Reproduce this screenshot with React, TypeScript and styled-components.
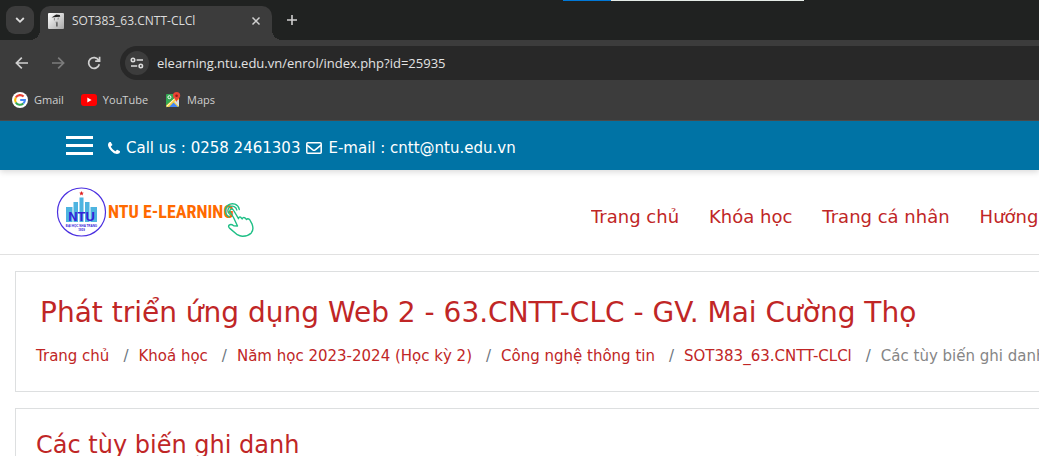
import React from "react";
import styled, { createGlobalStyle } from "styled-components";

const GlobalStyle = createGlobalStyle`
  *, *::before, *::after { box-sizing: border-box; }
  html { background: #fff; }
  body { margin: 0; background: #fff; }
  button { border: 0; padding: 0; background: none; color: inherit; font: inherit; cursor: pointer; }
  a { color: inherit; text-decoration: none; }
`;

const uiFont = `"Open Sans", "Noto Sans", sans-serif`;
const pageFont = `"DejaVu Sans", "Liberation Sans", sans-serif`;

const Shell = styled.div`
  display: flex;
  flex-direction: column;
  height: 100vh;
  padding-bottom: 4px;
  overflow: hidden;
`;

/* Browser window */

const Browser = styled.header`
  flex: none;
  background: #3c3c3c;
  color: #dcdcdc;
  font-family: ${uiFont};
  border-bottom: 1px solid #4a4a4a;
`;

const TabStrip = styled.div`
  position: relative;
  display: flex;
  height: 40px;
  padding: 6px 6px 0;
  background: #202221;
`;

const LoadBar = styled.div`
  position: absolute;
  top: 0;
  left: 563px;
  width: 241px;
  height: 1px;
  background: linear-gradient(to right, #0078d7 48px, #e4ebe6 48px);
`;

const TabSearch = styled.button`
  display: grid;
  place-items: center;
  width: 28px;
  height: 28px;
  border-radius: 9px;
  background: #3c3c3c;
`;

const Tab = styled.div`
  position: relative;
  display: flex;
  align-items: center;
  width: 232px;
  margin-left: 6px;
  padding: 0 8px 4px;
  border-radius: 10px 10px 0 0;
  background: #3c3c3c;

  &::before,
  &::after {
    content: "";
    position: absolute;
    bottom: 0;
    width: 10px;
    height: 10px;
  }
  &::before {
    right: 100%;
    background: radial-gradient(circle at 0 0, transparent 10px, #3c3c3c 10px);
  }
  &::after {
    left: 100%;
    background: radial-gradient(circle at 100% 0, transparent 10px, #3c3c3c 10px);
  }
`;

const TabTitle = styled.span`
  flex: 1;
  margin-left: 8px;
  font-size: 12px;
  line-height: 16px;
  white-space: nowrap;
`;

const IconButton = styled.button<{ $size: number; $dim?: boolean }>`
  display: grid;
  place-items: center;
  flex: none;
  width: ${(p) => p.$size}px;
  height: ${(p) => p.$size}px;
  color: ${(p) => (p.$dim ? "#7c7c7c" : "#d0d0d0")};
`;

const NewTab = styled(IconButton)`
  margin-left: 6px;
`;

const Toolbar = styled.div`
  display: flex;
  align-items: center;
  gap: 8px;
  height: 46px;
  padding-left: 8px;
`;

const AddressBar = styled.div`
  display: flex;
  align-items: center;
  flex: 1;
  height: 34px;
  margin-left: 4px;
  padding-left: 5px;
  border-radius: 17px 0 0 17px;
  background: #282828;
`;

const SiteInfo = styled.button`
  display: grid;
  place-items: center;
  flex: none;
  width: 24px;
  height: 24px;
  border-radius: 50%;
  background: #3c3c3c;
`;

const Address = styled.input`
  flex: 1;
  min-width: 0;
  border: 0;
  outline: 0;
  padding: 0 0 0 8px;
  background: none;
  color: #e2e2e2;
  font-family: ${uiFont};
  font-size: 13px;
  line-height: 20px;
`;

const Bookmarks = styled.nav`
  display: flex;
  align-items: center;
  gap: 17px;
  height: 34px;
  padding: 0 12px 6px;
`;

const Bookmark = styled.a`
  display: flex;
  align-items: center;
  gap: 6px;
  color: #cfcfcf;
  font-size: 11px;
  line-height: 16px;
`;

/* Web page */

const Site = styled.div`
  flex: 1;
  min-height: 0;
  overflow: hidden;
  background: #fff;
  color: #c02626;
  font-family: ${pageFont};
`;

const ContactBar = styled.div`
  display: flex;
  align-items: center;
  height: 49px;
  padding-left: 66px;
  background: #0073a5;
  color: #fff;
  box-shadow: 0 2px 6px rgba(0, 0, 0, 0.15);
`;

const MenuButton = styled.button`
  display: flex;
  flex-direction: column;
  gap: 5px;
  width: 27px;
`;

const MenuLine = styled.span`
  height: 3px;
  background: #fff;
`;

const Contact = styled.p`
  display: flex;
  align-items: center;
  gap: 6px;
  margin: 0 0 0 15px;
  padding-top: 5px;
  font-size: 15px;
  line-height: 22px;
  white-space: nowrap;
`;

const Masthead = styled.div`
  display: flex;
  align-items: center;
  justify-content: space-between;
  height: 85px;
  padding-left: 56px;
  border-bottom: 1px solid #e1e1e1;
`;

const Logo = styled.a`
  display: block;
  flex: none;
  height: 50px;
`;

const MainNav = styled.nav`
  display: flex;
  flex: none;
  gap: 30px;
  width: 448px;
  padding-top: 10px;
  overflow: hidden;
  font-size: 18px;
  line-height: 24px;
  white-space: nowrap;
`;

const Main = styled.main`
  display: flex;
  flex-direction: column;
  gap: 16px;
  padding: 16px 0 16px 15px;
`;

const Card = styled.section`
  padding: 20px 0 23px 20px;
  border: 1px solid #dddfe0;
  border-right: 0;
  overflow: hidden;
  white-space: nowrap;
`;

const PageTitle = styled.h1`
  margin: 0 0 10px 4px;
  font-size: 28px;
  font-weight: 400;
  line-height: 42px;
`;

const SectionTitle = styled.h2`
  margin: 0;
  font-size: 24px;
  font-weight: 400;
  line-height: 32px;
`;

const Crumbs = styled.ol`
  display: flex;
  margin: 0;
  padding: 0;
  list-style: none;
  font-size: 15px;
  line-height: 24px;
`;

const Crumb = styled.li`
  color: #868686;

  & a {
    color: #c02626;
  }
  & + &::before {
    content: "/";
    padding: 0 10px 0 14px;
    color: #6c757d;
  }
`;

const stroke = { fill: "none", stroke: "currentColor", strokeWidth: 1.8 } as const;

const ChevronIcon = () => (
  <svg width="10" height="8" viewBox="0 0 10 8" {...stroke}>
    <path d="M1.2 2 5 5.8 8.8 2" />
  </svg>
);

const FaviconIcon = () => (
  <svg width="16" height="16" viewBox="0 0 16 16">
    <defs>
      <linearGradient id="fav" x1="0" y1="0" x2="1" y2="1">
        <stop offset="0" stopColor="#fff" />
        <stop offset="1" stopColor="#a8a8a8" />
      </linearGradient>
    </defs>
    <rect width="16" height="16" rx="1" fill="url(#fav)" />
    <path d="M3.600 4.600 6.200 2.800l2-1.300 3.600.6.4 1.700-3.600.2z" fill="#222" />
    <path d="M6.400 5v2.400M10.300 4.600 10 6.600M7.600 9.200h2" fill="none" stroke="#888" strokeWidth="1" />
    <path d="M8.900 9.400v4" fill="none" stroke="#444" strokeWidth="1.300" />
  </svg>
);

const CloseIcon = () => (
  <svg width="10" height="10" viewBox="0 0 10 10" {...stroke} strokeWidth="1.5">
    <path d="m1.5 1.5 7 7m0-7-7 7" />
  </svg>
);

const PlusIcon = () => (
  <svg width="12" height="12" viewBox="0 0 12 12" {...stroke} strokeWidth="1.6">
    <path d="M6 1v10M1 6h10" />
  </svg>
);

const ArrowIcon = ({ forward }: { forward?: boolean }) => (
  <svg width="14" height="14" viewBox="0 0 14 14" {...stroke} strokeWidth="1.7">
    <path d={forward ? "M1 7h11M7.2 1.6 12.6 7l-5.4 5.4" : "M13 7H2M6.8 1.6 1.4 7l5.4 5.4"} />
  </svg>
);

const ReloadIcon = () => (
  <svg width="14" height="14" viewBox="0 0 14 14" {...stroke} strokeWidth="1.7">
    <path d="M11.7 4.2A5.4 5.4 0 1 0 12.3 8.2M12.6.8v4.4H8.2" />
  </svg>
);

const TuneIcon = () => (
  <svg width="14" height="12" viewBox="0 0 14 12" {...stroke} strokeWidth="1.6">
    <circle cx="3" cy="3" r="1.7" />
    <path d="M6.6 3H13M1 9h6.2" />
    <circle cx="10.8" cy="9" r="1.7" />
  </svg>
);

const GoogleIcon = () => (
  <svg width="16" height="16" viewBox="0 0 16 16">
    <circle cx="8" cy="8" r="8" fill="#fff" />
    <g fill="none" strokeWidth="2.1">
      <path d="M11.6 4.6A4.9 4.9 0 0 0 3.8 5.6" stroke="#ea4335" />
      <path d="M3.8 5.6a4.9 4.9 0 0 0 0 4.9" stroke="#fbbc05" />
      <path d="M3.8 10.5a4.9 4.9 0 0 0 7.5 1" stroke="#34a853" />
      <path d="M11.3 11.5A4.7 4.7 0 0 0 12.9 8H8.2" stroke="#4285f4" />
    </g>
  </svg>
);

const YouTubeIcon = () => (
  <svg width="16" height="12" viewBox="0 0 16 12">
    <rect width="16" height="12" rx="3" fill="#f00" />
    <path d="m6.3 3.4 4.3 2.6-4.3 2.6z" fill="#fff" />
  </svg>
);

const MapsIcon = () => (
  <svg width="16" height="16" viewBox="0 0 16 16">
    <rect x="1" y="2" width="13" height="13" rx="1" fill="#34a853" />
    <path d="M1 13.5 12 4l2 1v9l-1 1H2z" fill="#fbd03b" />
    <path d="M4.2 15 8.5 10.5 13 15z" fill="#4285f4" />
    <path d="m9.2 9.8 4.8 4.6V8l-2.5 0z" fill="#d9dde0" />
    <path d="M1.6 14.6 12.4 4" stroke="#fff" strokeWidth="1" />
    <circle cx="4.4" cy="5.2" r="1.5" fill="none" stroke="#fff" />
    <path d="M11.6 0a3.6 3.6 0 0 1 3.6 3.7c0 2.2-2.6 3.1-3.6 6.3-1-3.2-3.6-4.1-3.6-6.3A3.6 3.6 0 0 1 11.6 0z" fill="#ea4335" />
    <circle cx="11.6" cy="3.7" r="1.3" fill="#8c1d18" />
  </svg>
);

const PhoneIcon = () => (
  <svg width="12" height="12" viewBox="0 0 1408 1408" fill="currentColor">
    <path d="M1408 1112q0 27-10 70.500t-21 68.500q-21 50-122 106-94 51-186 51-27 0-53-3.500t-57.500-12.500-47-14.500-55.500-20.500-49-18q-98-35-175-83-127-79-264-216T152 776Q104 699 69 601q-3-9-18-49t-20.500-55.500-14.500-47T3.500 392 0 339q0-92 51-186Q107 52 157 31q25-11 68.500-21T296 0q14 0 21 3 18 6 53 76 11 19 30 54t35 63.500 31 53.500q3 4 17.500 25t21.500 35.500 7 28.500q0 20-28.500 50t-62 55-62 53-28.500 46q0 9 5 22.500t8.500 20.500 14 24 11.500 19q76 137 174 235t235 174q2 1 19 11.500t24 14 20.500 8.500 22.500 5q18 0 46-28.500t53-62 55-62 50-28.500q14 0 28.500 7t35.500 21.500 25 17.500q25 15 53.500 31t63.500 35 54 30q70 35 76 53 3 7 3 21z" />
  </svg>
);

const MailIcon = () => (
  <svg width="16" height="12" viewBox="0 0 16 12" {...stroke} strokeWidth="1.5">
    <rect x=".8" y=".8" width="14.400" height="10.400" rx="1" />
    <path d="M1 3.200 6.800 7.800q1.200.9 2.400 0L15 3.200" />
  </svg>
);

const LogoArt = () => (
  <svg width="200" height="50" viewBox="0 0 200 50" role="img" aria-label="NTU E-Learning">
    <circle cx="25.500" cy="25" r="24" fill="#fff" stroke="#4a2fe0" strokeWidth="1.200" />
    <path d="m25.500 4 .7 1.500 1.600.2-1.200 1.100.3 1.600-1.400-.8-1.400.8.3-1.600-1.200-1.100 1.600-.2z" fill="#e02020" />
    <g fill="#4db4e0">
      <path d="M10 20h6.500v15H10zM17.500 15H22v20h-4.500zM23.500 10.500h4V35h-4zM29 15h4.500v20H29zM34.500 20H41v15h-6.500z" />
    </g>
    <g fontFamily="'Liberation Sans', sans-serif" textAnchor="middle" fill="#3422d8">
      <text x="25.500" y="34" fontSize="13" fontWeight="700">NTU</text>
      <text x="25.500" y="40" fontSize="3" fontWeight="700">ĐẠI HỌC NHA TRANG</text>
      <text x="25.500" y="44" fontSize="3" fontWeight="700">1959</text>
    </g>
    <text x="52" y="31" fontFamily="'Roboto Condensed', Roboto, sans-serif" fontSize="18" fontWeight="700" fill="#ff6a00">NTU E-LEARNING</text>
    <g fill="none" stroke="#1fbf86" strokeWidth="1.400" strokeLinejoin="round" strokeLinecap="round">
      <path d="m181.500 39-4-8.500-3.400-5.500q-.8-2.200.9-2.900 1.700-.4 2.700 1.400l4.800 8.200q.2-2.200 2.200-1.500l1.400 1.700q1-2.200 3.200-.8l1.200 1.400q1.200-1.600 3.100 0l2.500 4.700q2 5.300-.8 8.700-3 3-8.500 3.300-2.500.2-5.500-1.500l-7.500-6.300q-2-1.800-.6-3.300 1.800-1.500 4.500.6z" />
      <path d="M174 27.500a4.500 4.500 0 1 1 6.800-4.500M173.300 30a7 7 0 1 1 10-7.500" />
    </g>
  </svg>
);

const bookmarks = [
  { label: "Gmail", icon: <GoogleIcon /> },
  { label: "YouTube", icon: <YouTubeIcon /> },
  { label: "Maps", icon: <MapsIcon /> },
];

const navItems = ["Trang chủ", "Khóa học", "Trang cá nhân", "Hướng dẫn"];

const crumbs = [
  "Trang chủ",
  "Khoá học",
  "Năm học 2023-2024 (Học kỳ 2)",
  "Công nghệ thông tin",
  "SOT383_63.CNTT-CLCl",
];

export default function App() {
  return (
    <Shell>
      <GlobalStyle />
      <Browser>
        <TabStrip>
          <LoadBar />
          <TabSearch aria-label="Search tabs"><ChevronIcon /></TabSearch>
          <Tab>
            <FaviconIcon />
            <TabTitle>SOT383_63.CNTT-CLCl</TabTitle>
            <IconButton $size={16} aria-label="Close tab"><CloseIcon /></IconButton>
          </Tab>
          <NewTab $size={28} aria-label="New tab"><PlusIcon /></NewTab>
        </TabStrip>
        <Toolbar>
          <IconButton $size={28} aria-label="Back"><ArrowIcon /></IconButton>
          <IconButton $size={28} $dim aria-label="Forward"><ArrowIcon forward /></IconButton>
          <IconButton $size={28} aria-label="Reload"><ReloadIcon /></IconButton>
          <AddressBar>
            <SiteInfo aria-label="Site information"><TuneIcon /></SiteInfo>
            <Address aria-label="Address" defaultValue="elearning.ntu.edu.vn/enrol/index.php?id=25935" />
          </AddressBar>
        </Toolbar>
        <Bookmarks aria-label="Bookmarks">
          {bookmarks.map((b) => (
            <Bookmark href="#" key={b.label}>{b.icon}{b.label}</Bookmark>
          ))}
        </Bookmarks>
      </Browser>
      <Site>
        <ContactBar>
          <MenuButton aria-label="Menu"><MenuLine /><MenuLine /><MenuLine /></MenuButton>
          <Contact>
            <PhoneIcon />
            <span>Call us : 0258 2461303</span>
            <MailIcon />
            <span>E-mail : cntt@ntu.edu.vn</span>
          </Contact>
        </ContactBar>
        <Masthead>
          <Logo href="#"><LogoArt /></Logo>
          <MainNav>
            {navItems.map((item) => <a href="#" key={item}>{item}</a>)}
          </MainNav>
        </Masthead>
        <Main>
          <Card>
            <PageTitle>Phát triển ứng dụng Web 2 - 63.CNTT-CLC - GV. Mai Cường Thọ</PageTitle>
            <Crumbs>
              {crumbs.map((c) => <Crumb key={c}><a href="#">{c}</a></Crumb>)}
              <Crumb>Các tùy biến ghi danh</Crumb>
            </Crumbs>
          </Card>
          <Card>
            <SectionTitle>Các tùy biến ghi danh</SectionTitle>
          </Card>
        </Main>
      </Site>
    </Shell>
  );
}
